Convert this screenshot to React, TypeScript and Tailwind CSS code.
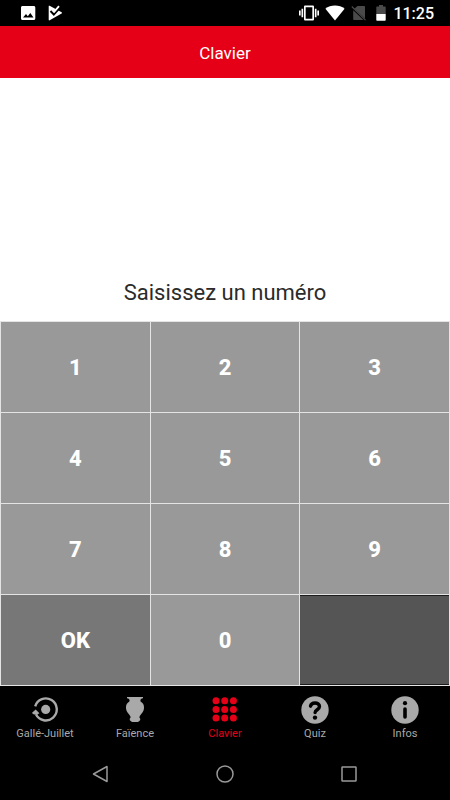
import { useState, type ReactNode } from 'react';

type TabKey = 'galle' | 'faience' | 'clavier' | 'quiz' | 'infos';

const tabs: { key: TabKey; label: string; icon: ReactNode }[] = [
  { key: 'galle', label: 'Gallé-Juillet', icon: <TourIcon /> },
  { key: 'faience', label: 'Faïence', icon: <VaseIcon /> },
  { key: 'clavier', label: 'Clavier', icon: <KeypadIcon /> },
  { key: 'quiz', label: 'Quiz', icon: <QuizIcon /> },
  { key: 'infos', label: 'Infos', icon: <InfoIcon /> },
];

const digits = ['1', '2', '3', '4', '5', '6', '7', '8', '9'];

export default function App() {
  const [tab, setTab] = useState<TabKey>('clavier');
  const [number, setNumber] = useState('');

  const press = (d: string) => setNumber((n) => (n + d).slice(0, 4));

  return (
    <div className="flex min-h-screen flex-col bg-white font-['Roboto',sans-serif]">
      <StatusBar />

      <header className="flex h-13 items-center justify-center bg-[#e60017] pt-0.5">
        <h1 className="text-[17px] leading-6 text-white">Clavier</h1>
      </header>

      <main className="flex flex-1 flex-col">
        <div className="flex flex-1 flex-col items-center justify-end pb-3.5">
          <output className="text-5xl text-[#333]">{number}</output>
          <p className="mt-6 text-[22px] leading-7 text-[#2b2b2b]">Saisissez un numéro</p>
        </div>

        <div className="grid grid-cols-3 gap-px bg-[#e4e4e4] p-px">
          {digits.map((d) => (
            <Key key={d} onClick={() => press(d)}>
              {d}
            </Key>
          ))}
          <Key tone="ok" onClick={() => setNumber('')}>
            OK
          </Key>
          <Key onClick={() => press('0')}>0</Key>
          <Key tone="erase" label="Effacer" onClick={() => setNumber((n) => n.slice(0, -1))} />
        </div>
      </main>

      <nav className="grid h-[61px] grid-cols-5 bg-black">
        {tabs.map((t) => (
          <button
            key={t.key}
            onClick={() => setTab(t.key)}
            className={`flex flex-col items-center pt-2.5 ${tab === t.key ? 'text-[#e60017]' : 'text-[#a9a9a9]'}`}
          >
            {t.icon}
            <span className="mt-0.5 text-[11px] leading-4">{t.label}</span>
          </button>
        ))}
      </nav>

      <SystemNav />
    </div>
  );
}

const keyTones = {
  digit: 'bg-[#999]',
  ok: 'bg-[#777]',
  erase: 'border-y border-[#1c1c1c] bg-[#555]',
};

function Key({
  children,
  tone = 'digit',
  label,
  onClick,
}: {
  children?: ReactNode;
  tone?: keyof typeof keyTones;
  label?: string;
  onClick: () => void;
}) {
  return (
    <button
      onClick={onClick}
      aria-label={label}
      className={`h-[90px] pt-0.5 text-[22px] leading-7 font-extrabold text-white ${keyTones[tone]}`}
    >
      {children}
    </button>
  );
}

function StatusBar() {
  return (
    <div className="flex h-[26px] items-center justify-between bg-black pr-4 pl-5 text-white">
      <div className="flex items-center gap-3">
        {/* Image */}
        <svg className="size-4" viewBox="0 0 16 16">
          <path
            fill="currentColor"
            fillRule="evenodd"
            d="M2.5 1h11.3c.8 0 1.5.7 1.5 1.5v11c0 .8-.7 1.5-1.5 1.5H2.5c-.8 0-1.5-.7-1.5-1.5v-11C1 1.7 1.7 1 2.5 1zM3 12.500h10.500L10.300 8 7.800 11.200 6 9z"
          />
        </svg>
        {/* Play */}
        <svg className="size-4" viewBox="0 0 16 16">
          <path fill="currentColor" d="M.7 1.200c0-.5.500-.6.900-.4L13.600 7.300c.5.300.5.900 0 1.200L1.700 15.300c-.5.200-1 0-1-.500z" />
          <path fill="none" stroke="#000" strokeWidth="2" d="M2.500 6l3.300 3.500L13 1.500" />
          <path fill="none" stroke="currentColor" strokeWidth="1.800" d="M4.300 4.700l2 2L11 1.200" />
        </svg>
      </div>

      <div className="flex items-center">
        {/* Vibrate */}
        <svg className="size-5" viewBox="0 0 24 24">
          <path
            fill="currentColor"
            d="M0 15h2V9H0v6zm3 2h2V7H3v10zm19-8v6h2V9h-2zm-3 8h2V7h-2v10zM16.500 3h-9C6.670 3 6 3.670 6 4.500v15c0 .83.670 1.500 1.500 1.500h9c.83 0 1.500-.67 1.500-1.500v-15c0-.83-.67-1.500-1.500-1.500zM16 19H8V5h8v14z"
          />
        </svg>
        {/* Wi-Fi */}
        <svg className="ml-1.5 h-4 w-5" viewBox="0 0 20 16">
          <path fill="currentColor" d="M.4 3.800C3 1.800 6.400.6 10 .6s7 1.200 9.600 3.200L10 15.500z" />
        </svg>
        {/* No SIM */}
        <svg className="ml-1.5 size-4" viewBox="0 0 16 16">
          <path fill="#4a4a4a" d="M6.500 1H13c.6 0 1 .4 1 1v11.500L3.300 3.700zM2.200 5.200L12.500 15H3.200c-.6 0-1-.4-1-1z" />
          <path stroke="#4a4a4a" strokeWidth="1.200" d="M.8 1.500l13.700 13.700" />
        </svg>
        {/* Battery */}
        <svg className="ml-2 h-4 w-3" viewBox="0 0 12 16">
          <path fill="#4a4a4a" d="M4 0h4v1.500h1.700c.6 0 1 .4 1 1V9H1.300V2.500c0-.6.400-1 1-1H4z" />
          <path fill="currentColor" d="M1.300 9h9.400v5.800c0 .6-.4 1-1 1H2.300c-.6 0-1-.4-1-1z" />
        </svg>
        <time className="ml-1.5 pt-0.5 text-base leading-6 font-medium">11:25</time>
      </div>
    </div>
  );
}

function SystemNav() {
  const btn = 'grid size-6 place-items-center text-[#999]';
  return (
    <div className="flex h-[53px] items-center justify-around bg-black px-[39px]">
      <button className={btn} aria-label="Retour">
        <svg className="size-6" viewBox="0 0 24 24">
          <path fill="none" stroke="currentColor" strokeWidth="1.500" strokeLinejoin="round" d="M18 4.500v15L4.500 12z" />
        </svg>
      </button>
      <button className={btn} aria-label="Accueil">
        <svg className="size-6" viewBox="0 0 24 24">
          <circle cx="12" cy="12" r="8" fill="none" stroke="currentColor" strokeWidth="1.500" />
        </svg>
      </button>
      <button className={btn} aria-label="Applications récentes">
        <svg className="size-6" viewBox="0 0 24 24">
          <rect x="5" y="5" width="14" height="14" rx="0.500" fill="none" stroke="currentColor" strokeWidth="1.500" />
        </svg>
      </button>
    </div>
  );
}

function TourIcon() {
  return (
    <svg className="size-7" viewBox="0 0 28 28">
      <circle cx="14.700" cy="13.400" r="4.600" fill="currentColor" />
      <path fill="none" stroke="currentColor" strokeWidth="2.400" d="M4.200 10.300A11 11 0 1 1 4.900 18.300" />
      <path fill="currentColor" d="M.8 17L4.700 13.500 8.400 17.300 6.500 18.500H3z" />
    </svg>
  );
}

function VaseIcon() {
  return (
    <svg className="size-7" viewBox="0 0 28 28">
      <path
        fill="currentColor"
        d="M6 1h16v1.200c-1.700.3-2.600 1-2.600 2.400 0 1.300.9 1.700 2 2.300C22.700 8 23.100 10 23 12.300c-.2 3.200-2.300 5.200-3.700 7-.8 1-1 1.800-.7 2.600.5.300.8.700.7 1.300 0 .7-.3 1.200-.9 1.700-.6.900-2.300 1.100-4.400 1.100s-3.800-.2-4.400-1.100c-.6-.5-.9-1-.9-1.700-.1-.6.2-1 .7-1.300.3-.8.1-1.600-.7-2.600-1.400-1.800-3.500-3.800-3.700-7C4.900 10 5.300 8 6.600 6.900c1.100-.6 2-1 2-2.300C8.600 3.200 7.700 2.500 6 2.200z"
      />
    </svg>
  );
}

function KeypadIcon() {
  const steps = [4.7, 13.4, 22.1];
  return (
    <svg className="size-7" viewBox="0 0 28 28">
      {steps.map((y) => steps.map((x) => <circle key={`${x}-${y}`} cx={x + 0.3} cy={y} r="3.500" fill="currentColor" />))}
    </svg>
  );
}

function QuizIcon() {
  return (
    <svg className="size-7" viewBox="0 0 28 28">
      <circle cx="14" cy="14" r="13.700" fill="currentColor" />
      <path
        fill="none"
        stroke="#000"
        strokeWidth="3.400"
        strokeLinecap="round"
        strokeLinejoin="round"
        d="M9.500 10.200C10 7.900 11.800 7 14 7c2.500 0 4.500 1.300 4.500 3.500 0 3.200-4.300 3.200-4.400 6"
      />
      <circle cx="14" cy="21.600" r="2.200" fill="#000" />
    </svg>
  );
}

function InfoIcon() {
  return (
    <svg className="size-7" viewBox="0 0 28 28">
      <circle cx="14" cy="14" r="13.700" fill="currentColor" />
      <circle cx="14" cy="7.200" r="2.100" fill="#000" />
      <path stroke="#000" strokeWidth="3.600" strokeLinecap="round" d="M14 13v8" />
    </svg>
  );
}
